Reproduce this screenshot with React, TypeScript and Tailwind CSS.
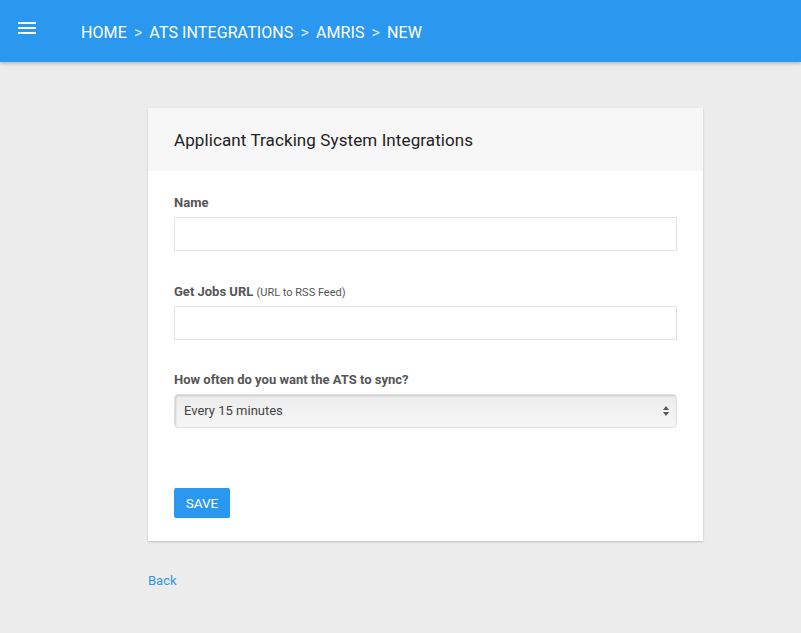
import React from "react";

export default function App() {
  return (
    <div className="min-h-[633px] bg-[#ececec]" style={{ fontFamily: "Roboto, 'Liberation Sans', sans-serif" }}>
      <header className="h-[62px] bg-[#2b98f0] flex items-center shadow-[0_2px_3px_rgba(0,0,0,0.2)] relative">
        <div className="w-[81px] flex pl-[18px] -mt-[6px]">
          <svg width="18" height="14" viewBox="0 0 18 14">
            <rect x="0" y="1" width="18" height="2" fill="#fff" />
            <rect x="0" y="6" width="18" height="2" fill="#fff" />
            <rect x="0" y="11" width="18" height="2" fill="#fff" />
          </svg>
        </div>
        <nav className="flex items-center text-white text-[16px] tracking-[0.1px] mt-[3px]">
          <span>HOME</span>
          <span className="text-[#cfe6fb] mx-[7px]">&gt;</span>
          <span>ATS INTEGRATIONS</span>
          <span className="text-[#cfe6fb] mx-[7px]">&gt;</span>
          <span>AMRIS</span>
          <span className="text-[#cfe6fb] mx-[7px]">&gt;</span>
          <span>NEW</span>
        </nav>
      </header>
      <main className="pt-[46px] pl-[148px]">
        <div className="w-[555px] bg-white shadow-[0_1px_2px_rgba(0,0,0,0.2)]">
          <div className="h-[63px] bg-[#f7f7f7] flex items-center px-[26px] pt-[2px]">
            <h1 className="text-[17px] tracking-[0.1px] text-[#222]">Applicant Tracking System Integrations</h1>
          </div>
          <div className="px-[26px] pt-[23px] pb-[23px]">
            <label className="block text-[13px] leading-[18px] font-bold text-[#555] mb-[5px]">Name</label>
            <input className="block w-[503px] h-[34px] border border-[#e2e2e2] outline-none" />
            <label className="block text-[13px] leading-[18px] font-bold text-[#555] mt-[32px] mb-[4px]">
              Get Jobs URL <span className="font-normal text-[11px]">(URL to RSS Feed)</span>
            </label>
            <input className="block w-[503px] h-[34px] border border-[#e2e2e2] outline-none" />
            <label className="block text-[13px] leading-[18px] font-bold text-[#555] mt-[31px] mb-[5px]">How often do you want the ATS to sync?</label>
            <div className="w-[503px] h-[34px] rounded-[4px] border border-[#e0e0e0] bg-gradient-to-b from-[#ececec] to-[#f6f6f6] shadow-[inset_1px_1px_2px_rgba(0,0,0,0.15)] flex items-center justify-between pl-[9px] pr-[7px]">
              <span className="text-[13px] text-[#444]">Every 15 minutes</span>
              <svg width="6" height="10" viewBox="0 0 6 10">
                <path d="M3 0 L6 4 L0 4 Z" fill="#555" />
                <path d="M3 10 L6 6 L0 6 Z" fill="#555" />
              </svg>
            </div>
            <button className="mt-[60px] w-[56px] h-[30px] bg-[#2b98f0] text-white text-[13.5px] rounded-[2px]">SAVE</button>
          </div>
        </div>
        <a className="block mt-[30px] text-[13px] text-[#2b98f0]">Back</a>
      </main>
    </div>
  );
}
